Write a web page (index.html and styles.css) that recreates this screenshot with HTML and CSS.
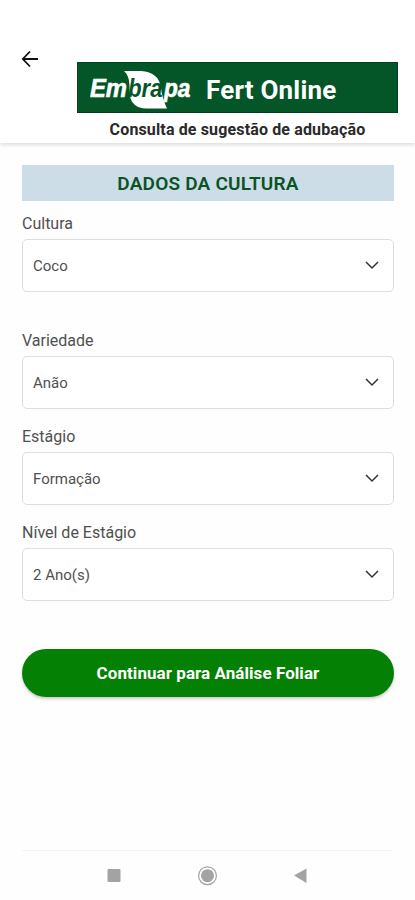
FILE: index.html
```html
<!DOCTYPE html>
<html lang="pt-BR">
<head>
    <meta charset="UTF-8">
    <meta name="viewport" content="width=device-width, initial-scale=1.0">
    <title>Embrapa Fert Online</title>
    <link rel="stylesheet" href="styles.css">
</head>
<body>

    <header class="header">
        <button class="back" aria-label="Voltar">
            <svg width="18" height="18" viewBox="0 0 18 18">
                <path d="M17 9H2M9 1.500L1.800 9l7.200 7.500"/>
            </svg>
        </button>
        <div class="brand">
            <div class="banner">
                <svg class="logo" width="104" height="42" viewBox="0 0 104 42">
                    <path class="leaf" d="M34 4H51C63 4.500 70 11 71 21C72 29 74 35 77 41.500H56C47 41.500 41 36 40 29C39 20 41 10 34 4Z"/>
                    <text class="logo-text" x="0" y="29.800" textLength="37" lengthAdjust="spacingAndGlyphs">Em</text>
                    <text class="logo-text logo-green" x="38" y="29.800" textLength="34.500" lengthAdjust="spacingAndGlyphs">bra</text>
                    <text class="logo-text" x="74" y="29.800" textLength="26.500" lengthAdjust="spacingAndGlyphs">pa</text>
                </svg>
                <h1>Fert Online</h1>
            </div>
            <p>Consulta de sugestão de adubação</p>
        </div>
    </header>

    <main class="content">
        <h2>DADOS DA CULTURA</h2>

        <div class="field field-cultura">
            <label>Cultura</label>
            <div class="select">
                <span>Coco</span>
                <svg width="14" height="9" viewBox="0 0 14 9"><path d="M1 1l6 6 6-6"/></svg>
            </div>
        </div>
        <div class="field">
            <label>Variedade</label>
            <div class="select">
                <span>Anão</span>
                <svg width="14" height="9" viewBox="0 0 14 9"><path d="M1 1l6 6 6-6"/></svg>
            </div>
        </div>
        <div class="field">
            <label>Estágio</label>
            <div class="select">
                <span>Formação</span>
                <svg width="14" height="9" viewBox="0 0 14 9"><path d="M1 1l6 6 6-6"/></svg>
            </div>
        </div>
        <div class="field">
            <label>Nível de Estágio</label>
            <div class="select">
                <span>2 Ano(s)</span>
                <svg width="14" height="9" viewBox="0 0 14 9"><path d="M1 1l6 6 6-6"/></svg>
            </div>
        </div>

        <button class="submit">Continuar para Análise Foliar</button>
    </main>

    <!-- Android navigation bar -->
    <nav class="navbar">
        <svg width="20" height="20" viewBox="0 0 20 20"><rect x="3.500" y="3" width="13" height="13" rx="1"/></svg>
        <svg width="20" height="20" viewBox="0 0 20 20">
            <circle class="ring" cx="10.500" cy="9.700" r="8.900"/>
            <circle cx="10.500" cy="9.700" r="6.500"/>
        </svg>
        <svg width="20" height="20" viewBox="0 0 20 20"><path d="M4 9.500L16.500 2.500v14.500z"/></svg>
    </nav>

</body>
</html>
```
FILE: styles.css
```css
* {
    box-sizing: border-box;
}
body {
    margin: 0;
    height: 900px;
    display: flex;
    flex-direction: column;
    font-family: Roboto, "Liberation Sans", sans-serif;
    background-color: #fefefe;
    color: #505050;
}
h1, h2, p {
    margin: 0;
}
button {
    border: none;
    padding: 0;
    font-family: inherit;
}

/* Header */
.header {
    display: flex;
    height: 143px;
    padding: 50px 17px 0 21px;
    background-color: #fff;
    box-shadow: 0 2px 4px rgba(0, 0, 0, 0.13);
}
.back {
    width: 56px;
    height: 18px;
    background: none;
    text-align: left;
}
.back svg {
    display: block;
    fill: none;
    stroke: #111;
    stroke-width: 1.8;
}
.brand {
    flex: 1;
    padding-top: 12px;
}
.banner {
    display: flex;
    align-items: center;
    height: 51px;
    padding-left: 12px;
    background-color: #045528;
    border: 1px solid #063d1c;
}
.logo-text {
    font-family: "Liberation Sans", sans-serif;
    font-size: 25px;
    font-weight: bold;
    font-style: italic;
    fill: #fff;
    stroke: #fff;
    stroke-width: 0.6;
}
.leaf {
    fill: #fff;
}
.logo-green {
    fill: #045528;
    stroke: none;
}
.banner h1 {
    margin: 5px 0 0 12px;
    font-size: 26px;
    line-height: 30px;
    font-weight: 700;
    letter-spacing: 0.2px;
    color: #fff;
    white-space: nowrap;
}
.brand p {
    margin-top: 7px;
    font-size: 16px;
    line-height: 20px;
    font-weight: 700;
    letter-spacing: 0.14px;
    color: #2a2a2a;
    text-align: center;
    white-space: nowrap;
}

/* Form */
.content {
    flex: 1;
    padding: 22px 21px 0 22px;
}
.content h2 {
    height: 36px;
    margin-bottom: 12px;
    font-size: 19px;
    line-height: 37px;
    font-weight: 600;
    letter-spacing: 0.2px;
    color: #0a5325;
    background-color: #cddde8;
    text-align: center;
}
.field {
    margin-bottom: 17px;
}
.field-cultura {
    margin-bottom: 38px;
}
.field label {
    display: block;
    height: 25.5px;
    font-size: 16px;
    line-height: 21px;
}
.select {
    display: flex;
    align-items: center;
    justify-content: space-between;
    height: 53.5px;
    padding: 1px 14px 0 10px;
    border: 1.5px solid #ddd;
    border-radius: 5px;
    background-color: #fff;
    font-size: 15px;
}
.select svg {
    fill: none;
    stroke: #333;
    stroke-width: 1.5;
}
.submit {
    display: block;
    width: 100%;
    height: 48px;
    margin-top: 47.5px;
    border-radius: 24px;
    background-color: #048104;
    box-shadow: 0 2px 3px rgba(0, 0, 0, 0.2);
    color: #fff;
    font-size: 17px;
    font-weight: 700;
    letter-spacing: 0.06px;
}

/* Bottom bar */
.navbar {
    display: flex;
    justify-content: space-between;
    height: 50px;
    margin: 0 22px;
    padding: 15px 83px 0 82px;
    border-top: 1px solid #f3f3f3;
    fill: #a3a3a3;
}
.navbar .ring {
    fill: none;
    stroke: #a3a3a3;
    stroke-width: 1.2;
}
```
